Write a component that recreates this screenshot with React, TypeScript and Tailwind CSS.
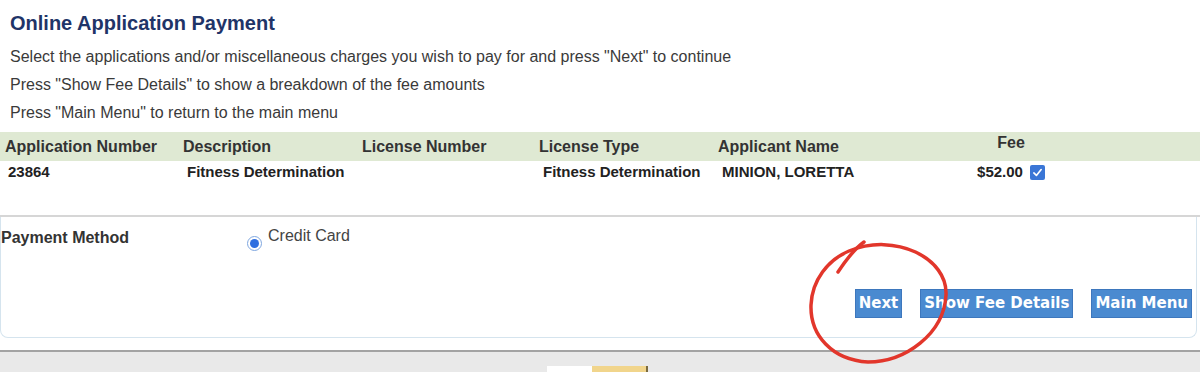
import React from "react";

const cols = "grid grid-cols-[178px_179px_177px_179px_233px_130px_1fr]";

export default function App() {
  return (
    <div className="relative w-[1200px] h-[372px] overflow-hidden bg-white font-['Liberation_Sans',Arial,sans-serif] text-[#333]">
      <div className="pl-[10px] pt-[11px]">
        <h1 className="text-[20px] leading-6 font-bold text-[#1f3468]">Online Application Payment</h1>
        <div className="mt-[8px] text-[16px] leading-[28px] text-[#3a3a3a]">
          <p>Select the applications and/or miscellaneous charges you wish to pay for and press "Next" to continue</p>
          <p>Press "Show Fee Details" to show a breakdown of the fee amounts</p>
          <p>Press "Main Menu" to return to the main menu</p>
        </div>
      </div>

      <div className={`${cols} mt-[5px] h-[29px] bg-[#dfe9d3] text-[16px] font-bold text-[#333] items-center`}>
        <div className="pl-[5px]">Application Number</div>
        <div className="pl-[5px]">Description</div>
        <div className="pl-[5px]">License Number</div>
        <div className="pl-[5px]">License Type</div>
        <div className="pl-[5px]">Applicant Name</div>
        <div className="text-center -mt-[8px]">Fee</div>
        <div />
      </div>
      <div className={`${cols} h-[22px] text-[15px] font-bold text-[#222] items-center`}>
        <div className="pl-[8px]">23864</div>
        <div className="pl-[9px]">Fitness Determination</div>
        <div className="pl-[9px]" />
        <div className="pl-[9px]">Fitness Determination</div>
        <div className="pl-[9px]">MINION, LORETTA</div>
        <div className="flex items-center justify-center gap-[7px]">
          <span>$52.00</span>
          <span className="flex h-[15px] w-[15px] items-center justify-center rounded-[2px] bg-[#3a76d6]">
            <svg width="11" height="11" viewBox="0 0 12 12">
              <path d="M2 6.5 L4.8 9.2 L10 2.8" fill="none" stroke="white" strokeWidth="1.8" strokeLinecap="round" strokeLinejoin="round" />
            </svg>
          </span>
        </div>
        <div />
      </div>

      <div className="mt-[32px] h-[2px] bg-[#d6d6d6]" />
      <div className="mr-[3px] h-[121px] rounded-b-[8px] border-x border-b border-[#d5e4ee] flex flex-col">
        <div className="flex items-start pt-[11px] text-[16px] leading-5">
          <div className="w-[246px] font-bold text-[#333]">Payment Method</div>
          <span className="mt-[8px] flex h-[15px] w-[15px] items-center justify-center rounded-full border border-[#7fa7e0] bg-white">
            <span className="h-[9px] w-[9px] rounded-full bg-[#2f6fe0]" />
          </span>
          <span className="ml-[6px] -mt-[2px] text-[#444]">Credit Card</span>
        </div>
        <div className="mt-auto mb-[19px] flex justify-end gap-[18px] pr-[4px] font-['DejaVu_Sans',Verdana,sans-serif] text-[15px] font-bold text-white">
          <button className="h-[29px] border border-[#3d77bd] bg-[#4a8ad0] px-[3px] leading-none">Next</button>
          <button className="h-[29px] border border-[#3d77bd] bg-[#4a8ad0] px-[3px] leading-none">Show Fee Details</button>
          <button className="h-[29px] border border-[#3d77bd] bg-[#4a8ad0] px-[3px] leading-none">Main Menu</button>
        </div>
      </div>
      <div className="h-[12px]" />
      <div className="h-[2px] bg-[#a3a3a3]" />
      <div className="h-[40px] bg-[#e9e9e9] pt-[14px] pl-[547px]">
        <div className="flex h-[10px] w-[101px]">
          <div className="w-[45px] bg-white" />
          <div className="flex-1 bg-[#f1d58c] border-r-2 border-[#7a6a40]" />
        </div>
      </div>

      <svg className="pointer-events-none absolute left-0 top-0" width="1200" height="372" viewBox="0 0 1200 372">
        <path
          d="M849 251 C 895 232, 948 258, 946 295 C 944 334, 905 362, 868 362 C 832 360, 810 335, 811 305 C 812 280, 828 260, 849 251"
          fill="none"
          stroke="#e2362b"
          strokeWidth="3.5"
          strokeLinecap="round"
        />
        <path d="M838 272 C 846 260, 854 249, 864 242" fill="none" stroke="#e2362b" strokeWidth="3.5" strokeLinecap="round" />
      </svg>
    </div>
  );
}
